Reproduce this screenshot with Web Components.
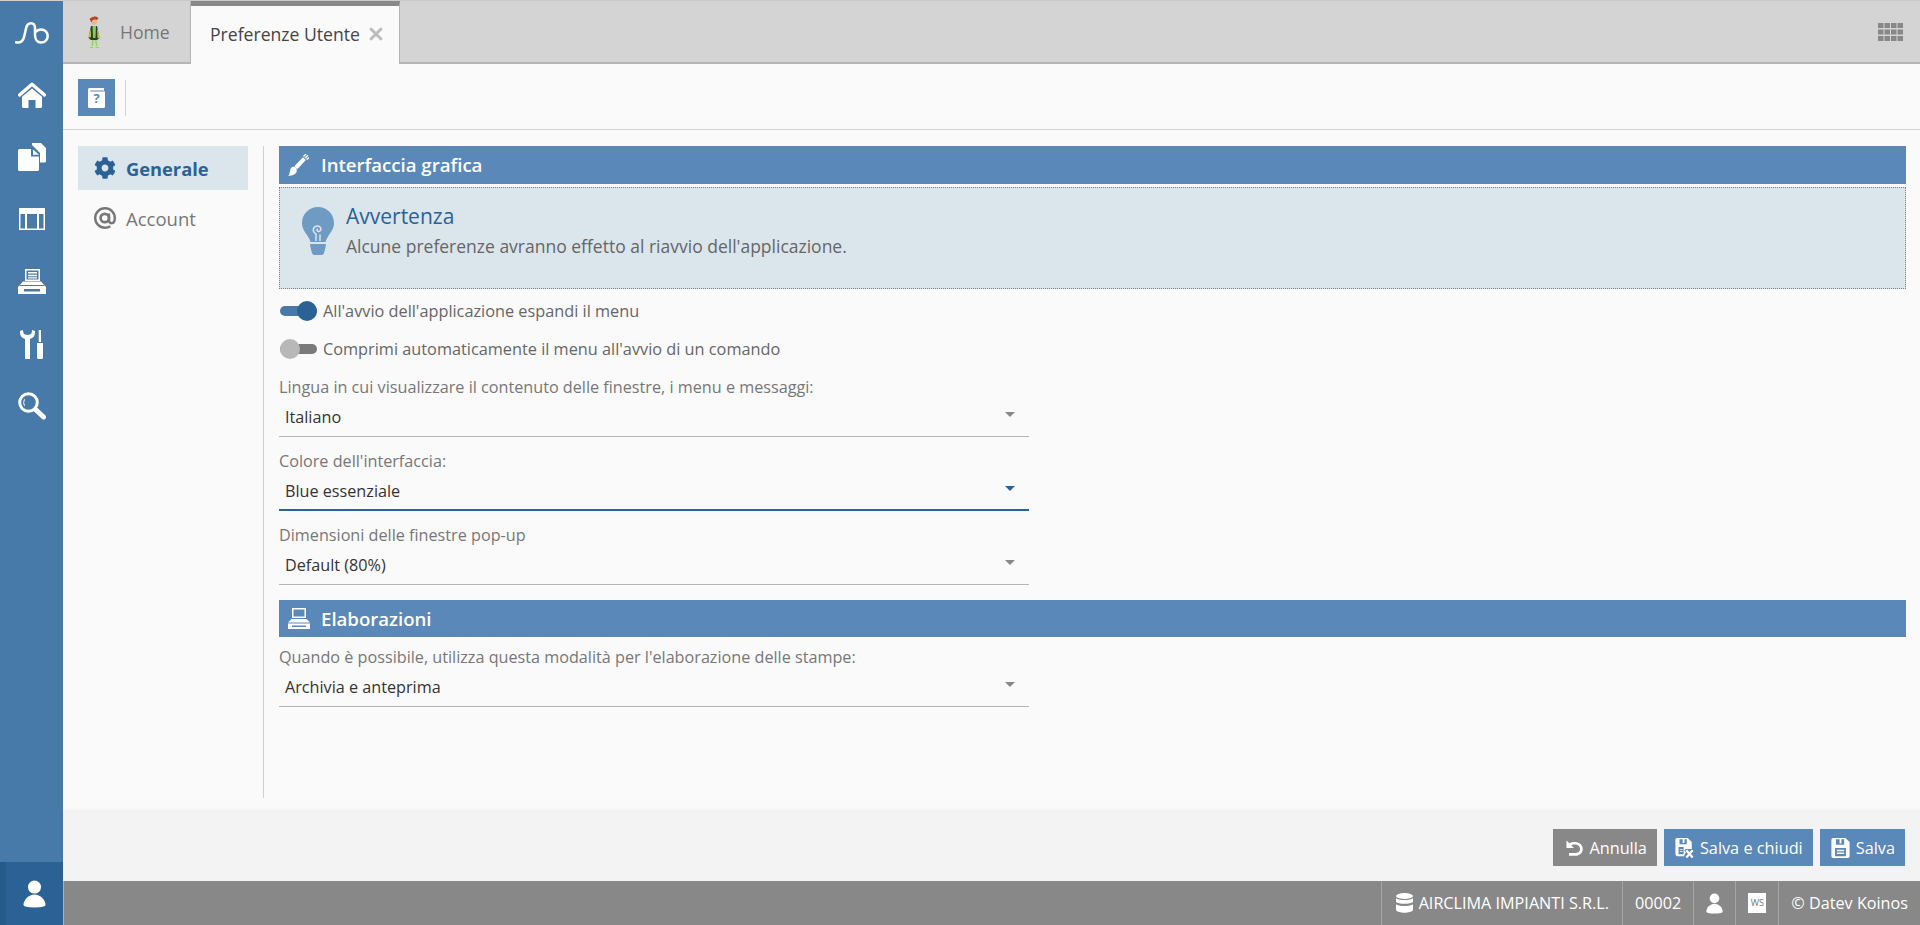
<!DOCTYPE html>
<html lang="it"><head><meta charset="utf-8"><title>Preferenze Utente</title>
<style>
html,body{margin:0;height:100%;background:#fafafa;font-family:"Open Sans",sans-serif;overflow:hidden}
</style></head><body>
<app-shell>
  <side-rail slot="rail"></side-rail>
  <tab-strip slot="tabs"></tab-strip>
  <tool-strip slot="tools"></tool-strip>
  <prefs-nav slot="nav">
    <nav-item icon="gear" active>Generale</nav-item>
    <nav-item icon="at">Account</nav-item>
  </prefs-nav>
  <prefs-panel slot="panel">
    <section-head icon="brush">Interfaccia grafica</section-head>
    <notice-box heading="Avvertenza">Alcune preferenze avranno effetto al riavvio dell'applicazione.</notice-box>
    <toggle-row on first>All'avvio dell'applicazione espandi il menu</toggle-row>
    <toggle-row>Comprimi automaticamente il menu all'avvio di un comando</toggle-row>
    <select-field label="Lingua in cui visualizzare il contenuto delle finestre, i menu e messaggi:" value="Italiano"></select-field>
    <select-field label="Colore dell'interfaccia:" value="Blue essenziale" focused></select-field>
    <select-field label="Dimensioni delle finestre pop-up" value="Default (80%)"></select-field>
    <section-head icon="printer" second>Elaborazioni</section-head>
    <select-field label="Quando è possibile, utilizza questa modalità per l'elaborazione delle stampe:" value="Archivia e anteprima"></select-field>
  </prefs-panel>
  <action-bar slot="actions">
    <action-button icon="undo" grey>Annulla</action-button>
    <action-button icon="savex">Salva e chiudi</action-button>
    <action-button icon="save">Salva</action-button>
  </action-bar>
  <status-bar slot="status"></status-bar>
</app-shell>
<script>
const ICONS={
logo:['0 0 34 22','<path d="M1 20.300C6 21.300 8.500 18.500 9.300 14L11 6.500C11.800 2.800 13 1.300 16 1.300C19 1.300 20 3.500 20 6.500L20 13C20 17.500 22.500 20.500 26 20.500C30 20.500 32.700 17.500 32.700 14C32.700 10.500 30 7.500 26 7.500C23.500 7.500 21.500 8.500 20 10.500" fill="none" stroke="currentColor" stroke-width="2.500" stroke-linecap="round"/>'],
home:['0 0 28 26','<path d="M1.500 13L14 2.200 26.500 13" fill="none" stroke="currentColor" stroke-width="3.400" stroke-linecap="round" stroke-linejoin="round"/><path d="M14 6.500L24 14.800V24.500Q24 26 22.500 26H17.500V18H10.500V26H5.500Q4 26 4 24.500V14.800Z" fill="currentColor"/>'],
docs:['0 0 28 28','<path d="M14 0H23L28 5V18Q28 19.500 26.500 19.500H22V10L14 2Z" fill="currentColor"/><path d="M1.500 6H13V13.500H21V26.500Q21 28 19.500 28H1.500Q0 28 0 26.500V7.500Q0 6 1.500 6ZM15 6.500L21 11.800H15Z" fill="currentColor"/>'],
table:['0 0 26 22','<path fill-rule="evenodd" d="M0 0H26V22H0ZM1.500 6V20.500H6V6ZM8 6V20.500H18V6ZM20 6V20.500H24.500V6Z" fill="currentColor"/>'],
printer:['0 0 28 25','<path fill-rule="evenodd" d="M7 0H22V12H7ZM8.500 1.500V10.500H20.500V1.500ZM10 3H19V4.500H10ZM10 5.800H19V7.300H10ZM10 8.200H19V9.500H10Z" fill="currentColor"/><path fill-rule="evenodd" d="M5 12.500H23L28 18V25H0V18ZM1 16H27V17H1ZM6 20V22.500H22V20Z" fill="currentColor"/>'],
printer2:['0 0 22 21','<path fill-rule="evenodd" d="M4 0H18V10H4ZM5.500 1.500V8.500H16.500V1.500Z" fill="currentColor"/><path d="M3.500 11H18.500L22 14.500H0ZM0 15.500H22V21H0ZM4 17.500V19H18V17.500Z" fill="currentColor" fill-rule="evenodd"/>'],
tools:['0 0 24 29','<path d="M0 2.500C0 6 1.800 8 5 9V29H10V9C13.200 8 15 6 15 2.500L15 1 12.200 0 11.300 3.800C9.500 5.300 5.500 5.300 3.800 3.800L2.800 0 0 1Z" fill="currentColor"/><path d="M18.700 0H21V12H18.700ZM17 13H23V27.500Q23 29 21.500 29H18.500Q17 29 17 27.500Z" fill="currentColor"/>'],
search:['0 0 28 28','<circle cx="10.500" cy="10.500" r="8.800" fill="none" stroke="currentColor" stroke-width="3"/><path d="M17.500 17.500L25.500 25" stroke="currentColor" stroke-width="5" stroke-linecap="round"/><path d="M6.500 7.200Q4.700 10.500 6.500 13.800" fill="none" stroke="currentColor" stroke-width="1"/>'],
user:['0 0 24 28','<circle cx="12" cy="6.800" r="6.800" fill="currentColor"/><path d="M12 14.500C18 14.500 23.500 20 23.500 25.500Q23.500 28 12 28T.5 25.500C.5 20 6 14.500 12 14.500Z" fill="currentColor"/>'],
helpbook:['0 0 17 20','<path d="M1.500 0H16V2.500H2.200V3.600H17V18.500Q17 20 15.500 20H1.500Q0 20 0 18.500V1.500Q0 0 1.500 0Z" fill="currentColor"/>'],
gear:['0 0 512 512','<path d="M487.400 315.700l-42.600-24.600c4.300-23.200 4.300-47 0-70.200l42.600-24.600c4.900-2.800 7.100-8.600 5.500-14-11.100-35.600-30-67.800-54.700-94.600-3.800-4.100-10-5.100-14.800-2.300L380.800 110c-17.900-15.400-38.500-27.300-60.800-35.100V25.800c0-5.600-3.900-10.500-9.400-11.700-36.700-8.200-74.300-7.800-109.200 0-5.500 1.200-9.400 6.100-9.400 11.700V75c-22.200 7.900-42.800 19.800-60.800 35.100L88.700 85.500c-4.900-2.800-11-1.900-14.800 2.300-24.700 26.700-43.600 58.900-54.700 94.600-1.700 5.400.6 11.200 5.500 14L67.300 221c-4.300 23.200-4.300 47 0 70.200l-42.600 24.600c-4.900 2.800-7.100 8.600-5.500 14 11.100 35.600 30 67.800 54.700 94.600 3.800 4.100 10 5.100 14.800 2.300l42.600-24.600c17.900 15.400 38.500 27.300 60.800 35.100v49.200c0 5.600 3.900 10.500 9.400 11.700 36.700 8.200 74.300 7.800 109.200 0 5.500-1.200 9.400-6.100 9.400-11.700v-49.200c22.200-7.900 42.800-19.800 60.800-35.100l42.600 24.600c4.900 2.800 11 1.900 14.800-2.300 24.700-26.700 43.600-58.900 54.700-94.600 1.500-5.500-.7-11.300-5.600-14.100zM256 336c-44.100 0-80-35.900-80-80s35.900-80 80-80 80 35.900 80 80-35.900 80-80 80z" fill="currentColor"/>'],
at:['0 0 22 22','<circle cx="10.800" cy="11" r="4.200" fill="none" stroke="currentColor" stroke-width="2.700"/><path d="M15 6.500V13C15 15.500 16.200 16.200 17.500 16.200C19.500 16.200 20.800 14 20.800 11C20.800 5.500 16.500 1.200 11 1.200C5.500 1.200 1.200 5.500 1.200 11C1.200 16.500 5.500 20.800 11 20.800C13 20.800 14.800 20.300 16.300 19.300" fill="none" stroke="currentColor" stroke-width="2.400"/>'],
brush:['0 0 21 22','<path d="M7 11.500L15 3.300 17.800 6 10 14.500C9.500 15 9 15 8.500 14.500L7 13Z" fill="currentColor"/><path d="M6 12.500C8 13 9 15 8.800 17C8.300 20 5 21.800 .300 22C1.500 20.500 1.800 18.500 2.200 16.300C2.500 14 4 12.500 6 12.500Z" fill="currentColor"/><path d="M15.500 2.500L18 0M17 4L20 1.300M18.500 5.500L21 3.500" stroke="currentColor" stroke-width="1.400"/>'],
bulb:['0 0 32 48','<path d="M16 0C7 0 0 7 0 16C0 22 3.500 25.500 6 29.500C7.200 31.500 8 33 8.500 35H23.500C24 33 24.800 31.500 26 29.500C28.500 25.500 32 22 32 16C32 7 25 0 16 0Z" fill="currentColor"/><path d="M8 37H24L23.500 40.500L22 46Q21.500 48 19.500 48H12.500Q10.500 48 10 46L8.500 40.500Z" fill="currentColor"/><path d="M14 34L14 27C10 25 10.500 19.500 15 19C19 18.500 20.500 23.500 17 24.500C14.800 25 14.200 22.500 16 22" fill="none" stroke="#dae5ec" stroke-width="1.500"/><path d="M18 34V27.500" fill="none" stroke="#dae5ec" stroke-width="1.500"/>'],
undo:['0 0 17 16','<path d="M.5 .5V8H8L5.200 5.200C8.500 3.800 14 4.500 14 9C14 12 11.500 13 9 13H3V15.800H9.500C13 15.800 16.800 13.500 16.800 9C16.800 2.200 8.500 .3 3.300 3.300Z" fill="currentColor"/>'],
save:['0 0 20 22','<path fill-rule="evenodd" d="M2 0H15.500L20 4.500V20Q20 22 18 22H2Q0 22 0 20V2Q0 0 2 0ZM5 1.500V7.500H14V1.500H11V6H9V1.500ZM4 11V20H16V11ZM6 13H14V14.500H6ZM6 16H14V17.500H6Z" fill="currentColor"/>'],
savex:['0 0 20 22','<path fill-rule="evenodd" d="M2 0H13.500L18 4.500V12H11.500L9.800 13.800 11.500 15.700 9.300 20H2Q0 20 0 18V2Q0 0 2 0ZM4.500 1.500V6.800H12.500V1.500H10V5.500H8V1.500ZM3.500 10V18H9V10ZM4.800 12H8V13H4.800ZM4.800 14.500H8V15.500H4.800Z" fill="currentColor"/><path d="M12 13.500L19 21.500M19 13.500L12 21.500" stroke="currentColor" stroke-width="2.400"/>'],
db:['0 0 17 20','<ellipse cx="8.500" cy="3" rx="8.500" ry="3" fill="currentColor"/><path d="M0 5.200C2 7.600 15 7.600 17 5.200V9C15 11.400 2 11.400 0 9ZM0 11.200C2 13.600 15 13.600 17 11.200V17C15 20.600 2 20.600 0 17Z" fill="currentColor"/>'],
close:['0 0 14 14','<path d="M1.200 1.200L12.800 12.800M12.800 1.200L1.200 12.800" stroke="currentColor" stroke-width="3"/>'],
grid:['0 0 25 18','<path d="M0 0h5.500v5H0zM6.500 0H12v5H6.500zM13 0h5.500v5H13zM19.500 0H25v5h-5.500zM0 6.500h5.500v5H0zM6.500 6.500H12v5H6.500zM13 6.500h5.500v5H13zM19.500 6.500H25v5h-5.500zM0 13h5.500v5H0zM6.500 13H12v5H6.500zM13 13h5.500v5H13zM19.500 13H25v5h-5.500z" fill="currentColor"/>'],
hero:['0 0 14 32','<path d="M4 10L1.500 22 4 24H10L12.500 22 10 10Z" fill="#2f3a30"/><path d="M5.500 10H9L8.500 22H6Z" fill="#7fd14a"/><path d="M10 12L13.500 23 10.500 22ZM4 13L1 22 4 21Z" fill="#b9c64a"/><path d="M5 24L4.500 30H6L6.800 24ZM8 24L9 30H10.500L9.500 24Z" fill="#8ed65a"/><path d="M3 31H6V32H3ZM8.500 31H12V32H8.500Z" fill="#8ed65a"/><circle cx="7" cy="5.500" r="3.200" fill="#e8b890"/><path d="M2.500 3C5 0 10 -.5 11.500 2.500L9.500 4C7 3 5.500 3.500 4.500 6.500Z" fill="#b4472a"/>']
};
function svg(name,w,h){const[i,b]=ICONS[name];return `<svg viewBox="${i}" width="${w}" height="${h}" aria-hidden="true" style="display:block;flex:none">${b}</svg>`}
function def(tag,css,html){
  customElements.define(tag,class extends HTMLElement{
    constructor(){super();this.attachShadow({mode:'open'})}
    connectedCallback(){const v=typeof html==='function'?html(this):html;this.shadowRoot.innerHTML=`<style>${css}</style>${v}`}
  });
}
def('app-shell',`
:host{display:grid;grid-template-columns:63px 1fr;grid-template-rows:64px 66px 1fr 69px 44px;height:100vh;font-family:"Open Sans",sans-serif}
.body{display:flex;min-height:0;padding:16px 14px 14px 15px}
::slotted([slot=rail]){grid-row:1/-1;grid-column:1}
`,`<slot name="rail"></slot><slot name="tabs"></slot><slot name="tools"></slot>
<div class="body"><slot name="nav"></slot><slot name="panel"></slot></div>
<slot name="actions"></slot><slot name="status"></slot>`);
def('side-rail',`
:host{display:flex;flex-direction:column;background:#4779a9;color:#fff;border-top:1px solid #d0d0d0;box-sizing:border-box}
.b{display:flex;height:62px;align-items:center;justify-content:center;flex:none}
.logo{height:63px;padding-left:1px;box-sizing:border-box}
.sp{flex:1}
.u{height:63px;background:#2b6296;border-left:6px solid #255a8b;display:flex;align-items:center;justify-content:center}
.list{display:flex;flex-direction:column}
.list .b:nth-child(n+5){padding-top:2px;box-sizing:content-box;height:60px}
.list .b:nth-child(n+5)~.b{}
`,`<a class="b logo">${svg('logo',34,22)}</a>
<div class="list">
<a class="b">${svg('home',28,26)}</a>
<a class="b">${svg('docs',28,28)}</a>
<a class="b">${svg('table',26,22)}</a>
<a class="b">${svg('printer',28,25)}</a>
<a class="b">${svg('tools',24,29)}</a>
<a class="b">${svg('search',28,28)}</a>
</div><div class="sp"></div><div class="u">${svg('user',23,28)}</div>`);
def('tab-strip',`
:host{display:flex;background:#d4d4d4;border-top:1px solid #c9c9c9;box-sizing:border-box;height:64px;align-items:stretch;font-size:17.6px}
.t{display:flex;align-items:center;box-sizing:border-box;height:63px}
.home{width:128px;border-bottom:2px solid #b5b5b5;border-right:1px solid #b5b5b5;color:#777;padding:1px 0 0 24px;gap:19px}
.act{width:209px;background:#fafafa;border-top:5px solid #888;border-right:1px solid #b5b5b5;color:#444;padding:0 0 3px 19px;gap:9px}
.x{color:#bdbdbd}
.rest{flex:1;display:flex;align-items:center;justify-content:flex-end;padding:0 17px 0 0;color:#888;border-bottom:2px solid #b5b5b5;height:63px;box-sizing:border-box}
`,`<div class="t home">${svg('hero',14,32)}<span>Home</span></div>
<div class="t act"><span>Preferenze Utente</span><span class="x">${svg('close',14,14)}</span></div>
<div class="rest">${svg('grid',25,18)}</div>`);
def('tool-strip',`
:host{display:flex;align-items:flex-start;box-sizing:border-box;height:66px;padding:15px 0 0 15px;border-bottom:1px solid #d2d2d2;background:#fafafa}
.b{width:37px;height:37px;background:#5a88b8;color:#fff;display:flex;align-items:center;justify-content:center;position:relative}
.q{position:absolute;left:0;right:0;top:11px;text-align:center;color:#5a88b8;font:700 13px/16px "Open Sans",sans-serif}
.s{width:1px;height:36px;background:#d2d2d2;margin:1px 0 0 10px}
`,`<div class="b">${svg('helpbook',17,20)}<span class="q">?</span></div><div class="s"></div>`);
def('prefs-nav',`
:host{display:flex;flex-direction:column;width:186px;flex:none;box-sizing:border-box;border-right:1px solid #d0d0d0;padding-right:15px;margin-right:15px;height:652px}
`,`<slot></slot>`);
def('nav-item',`
:host{display:flex;align-items:center;height:44px;padding-left:15px;gap:10px;font-size:18.5px;color:#777;margin-bottom:6px}
:host([active]){background:#dae5ec;color:#2b6296;font-weight:700;font-size:18.3px}
.i{width:23px;display:flex;justify-content:center}
`,h=>`<span class="i">${svg(h.getAttribute('icon'),22,22)}</span><slot></slot>`);
def('prefs-panel',`:host{display:block;flex:1;min-width:0}`,`<slot></slot>`);
def('section-head',`
:host{display:flex;align-items:center;height:38px;background:#5a88b8;color:#fff;font-size:18.6px;font-weight:600;padding-left:9px;gap:12px;padding-bottom:1px;box-sizing:border-box}
:host([second]){margin-top:11px;height:37px}
.i{width:21px;display:flex;justify-content:center}
`,h=>`<span class="i">${h.hasAttribute('second')?svg('printer2',22,21):svg('brush',21,22)}</span><slot></slot>`);
def('notice-box',`
:host{display:flex;box-sizing:border-box;margin-top:3px;height:102px;background:#dae5ec;border:1px dotted #5a88b8;padding:19px 0 0 22px;gap:12px;color:#666;font-size:17.5px}
.i{color:#6f9ac2;flex:none}
h3{margin:-4px 0 0;font-size:21px;font-weight:400;color:#2b6296;line-height:27px;height:27px}
p{margin:6px 0 0;line-height:20px}
`,h=>`<div class="i">${svg('bulb',32,48)}</div><div><h3>${h.getAttribute('heading')}</h3><p><slot></slot></p></div>`);
def('toggle-row',`
:host{display:flex;align-items:center;height:37px;font-size:16.3px;color:#666;padding-left:1px;gap:6px}
:host([first]){margin-top:3px;margin-bottom:1px}
.tr{position:relative;width:37px;height:10px;border-radius:5px;background:#7a7a7a;flex:none}
:host([on]) .tr{background:#4779a9}
.k{position:absolute;top:-5px;left:0;width:20px;height:20px;border-radius:50%;background:#b8b8b8}
:host([on]) .k{left:17px;background:#2b6296}
`,`<span class="tr"><span class="k"></span></span><span><slot></slot></span>`);
def('select-field',`
:host{display:block;box-sizing:border-box;width:750px;height:74px;padding-top:10px;font-size:16.2px;color:#777}
.l{line-height:20px;height:20px}
.v{box-sizing:border-box;height:40px;padding:10px 0 0 6px;line-height:21px;color:#333;display:flex;justify-content:space-between;border-bottom:1px solid #b5b5b5;position:relative}
:host([focused]) .v{border-bottom:2px solid #2b6296}
.a{position:absolute;right:14px;top:15px;width:0;height:0;border:5.500px solid transparent;border-top:5.500px solid #888;border-bottom:0}
:host([focused]) .a{border-top-color:#2b6296}
`,h=>`<div class="l">${h.getAttribute('label')}</div><div class="v"><span>${h.getAttribute('value')}</span><span class="a"></span></div>`);
def('action-bar',`
:host{display:flex;justify-content:flex-end;align-items:flex-start;background:#f3f3f3;box-shadow:0 -2px 3px rgba(0,0,0,.05);padding:17px 15px 0 0;gap:7px;box-sizing:border-box;height:69px;position:relative}
`,`<slot></slot>`);
def('action-button',`
:host{display:flex;align-items:center;height:37px;box-sizing:border-box;background:#5a88b8;color:#fff;font-size:16.3px;padding:0 10px 0 11px;gap:6px}
:host([grey]){background:#888;padding-left:13px}
`,h=>{const n=h.getAttribute('icon');return svg(n,n==='undo'?17:19,n==='undo'?16:20)+'<slot></slot>'});
def('status-bar',`
:host{display:flex;justify-content:flex-end;align-items:stretch;background:#888;color:#fff;font-size:16.2px;height:44px;box-sizing:border-box;border-left:1px solid #b0b0b0}
.c{display:flex;align-items:center;border-left:1px solid #a5a5a5;padding:0 12px;gap:6px;white-space:nowrap}
.ws{width:18px;height:20px;background:#fff;color:#777;font:400 9px/20px "Open Sans",sans-serif;text-align:center;display:block}
`,`<div class="c" style="padding-left:14px;padding-right:13px">${svg('db',17,20)}<span>AIRCLIMA IMPIANTI S.R.L.</span></div>
<div class="c"><span>00002</span></div>
<div class="c">${svg('user',17,21)}</div>
<div class="c" style="padding:0 12px"><span class="ws">WS</span></div>
<div class="c"><span>© Datev Koinos</span></div>`);
</script>
</body></html>
